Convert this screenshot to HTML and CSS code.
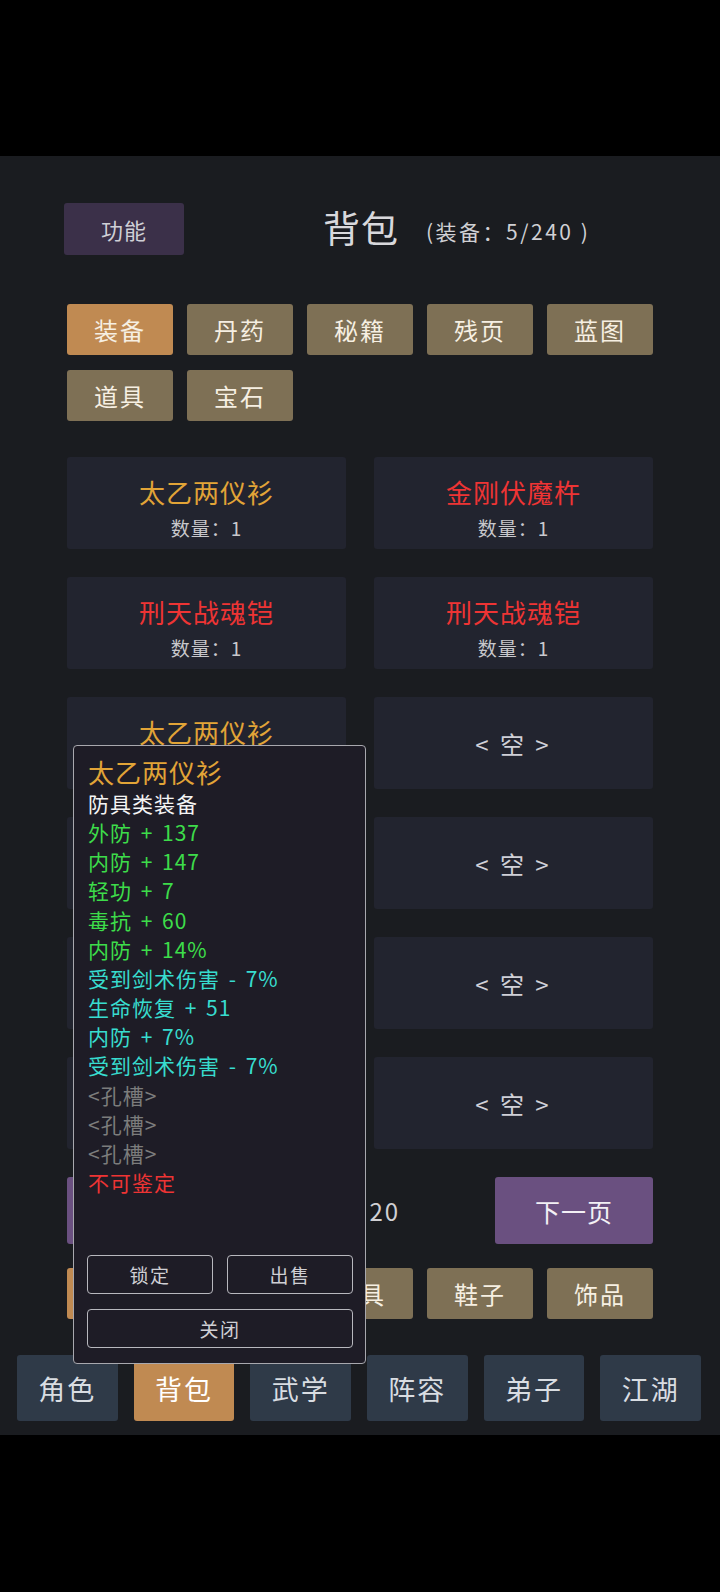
FILE: index.html
```html
<!DOCTYPE html>
<html lang="zh">
<head>
  <meta charset="UTF-8">
  <meta name="viewport" content="width=device-width, initial-scale=1.0">
  <title>背包</title>
  <link rel="stylesheet" href="styles.css">
</head>
<body>
  <div class="app">
    <div class="header">
      <button class="func-btn">功能</button>
      <div class="title">背包<span class="sub">(装备：5/240 )</span></div>
    </div>

    <div class="tabs">
      <button class="tab active">装备</button>
      <button class="tab">丹药</button>
      <button class="tab">秘籍</button>
      <button class="tab">残页</button>
      <button class="tab">蓝图</button>
      <button class="tab">道具</button>
      <button class="tab">宝石</button>
    </div>

    <div class="grid">
      <div class="card"><div class="name gold">太乙两仪衫</div><div class="count">数量：1</div></div>
      <div class="card"><div class="name red">金刚伏魔杵</div><div class="count">数量：1</div></div>
      <div class="card"><div class="name red">刑天战魂铠</div><div class="count">数量：1</div></div>
      <div class="card"><div class="name red">刑天战魂铠</div><div class="count">数量：1</div></div>
      <div class="card"><div class="name gold">太乙两仪衫</div><div class="count">数量：1</div></div>
      <div class="card empty">&lt; 空 &gt;</div>
      <div class="card empty">&lt; 空 &gt;</div>
      <div class="card empty">&lt; 空 &gt;</div>
      <div class="card empty">&lt; 空 &gt;</div>
      <div class="card empty">&lt; 空 &gt;</div>
      <div class="card empty">&lt; 空 &gt;</div>
      <div class="card empty">&lt; 空 &gt;</div>
    </div>

    <div class="pager">
      <button class="page-btn">上一页</button>
      <div class="page-num">1 / 20</div>
      <button class="page-btn">下一页</button>
    </div>

    <div class="filters">
      <button class="tab active">全部</button>
      <button class="tab">武器</button>
      <button class="tab">防具</button>
      <button class="tab">鞋子</button>
      <button class="tab">饰品</button>
    </div>

    <div class="nav">
      <button class="nav-btn">角色</button>
      <button class="nav-btn active">背包</button>
      <button class="nav-btn">武学</button>
      <button class="nav-btn">阵容</button>
      <button class="nav-btn">弟子</button>
      <button class="nav-btn">江湖</button>
    </div>

    <!-- item detail tooltip -->
    <div class="popup">
      <div class="pop-title">太乙两仪衫</div>
      <div class="line white">防具类装备</div>
      <div class="line green">外防 + 137</div>
      <div class="line green">内防 + 147</div>
      <div class="line green">轻功 + 7</div>
      <div class="line green">毒抗 + 60</div>
      <div class="line green">内防 + 14%</div>
      <div class="line cyan">受到剑术伤害 - 7%</div>
      <div class="line cyan">生命恢复 + 51</div>
      <div class="line cyan">内防 + 7%</div>
      <div class="line cyan">受到剑术伤害 - 7%</div>
      <div class="line gray">&lt;孔槽&gt;</div>
      <div class="line gray">&lt;孔槽&gt;</div>
      <div class="line gray">&lt;孔槽&gt;</div>
      <div class="line red">不可鉴定</div>
      <div class="pop-actions">
        <button class="pop-btn">锁定</button>
        <button class="pop-btn">出售</button>
        <button class="pop-btn wide">关闭</button>
      </div>
    </div>
  </div>
</body>
</html>
```

FILE: styles.css
```css
body {
  margin: 0;
  background: #000;
  font-family: "Noto Sans CJK SC", "Noto Sans", sans-serif;
  width: 720px;
  height: 1592px;
}

button {
  font-family: inherit;
  border: none;
  cursor: pointer;
  padding: 0;
}

.app {
  position: relative;
  margin-top: 156px;
  height: 1279px;
  box-sizing: border-box;
  padding: 47px 67px 0 67px;
  background: #1a1c20;
}

.header {
  display: flex;
  align-items: center;
  height: 52px;
}

.func-btn {
  width: 120px;
  height: 52px;
  margin-left: -3px;
  background: #3b3049;
  color: #cfcfd6;
  font-size: 22px;
  letter-spacing: 1px;
  border-radius: 3px;
}

.title {
  margin-left: 139px;
  color: #d8d8dc;
  font-size: 37px;
  letter-spacing: 1px;
  line-height: 52px;
  white-space: nowrap;
}

.sub {
  font-size: 21px;
  letter-spacing: 2.5px;
  color: #d0d0d4;
  margin-left: 27px;
  vertical-align: 3px;
}

.tabs,
.filters {
  display: grid;
  grid-template-columns: repeat(5, 1fr);
  gap: 15px 14px;
}

.tabs {
  margin-top: 49px;
}

.tab {
  height: 51px;
  background: #7e7055;
  color: #f6efe2;
  font-size: 24px;
  letter-spacing: 2px;
  border-radius: 3px;
}

.tab.active {
  background: #c08a52;
}

.grid {
  display: grid;
  grid-template-columns: 1fr 1fr;
  grid-auto-rows: 92px;
  gap: 28px;
  margin-top: 36px;
}

.card {
  background: #22242f;
  border-radius: 3px;
  box-sizing: border-box;
  padding-top: 18px;
  text-align: center;
}

.card .name {
  font-size: 26px;
  letter-spacing: 1px;
  line-height: 34px;
}

.card .count {
  font-size: 19px;
  letter-spacing: 1px;
  color: #c8c8cc;
  line-height: 38px;
}

.card.empty {
  padding-top: 0;
  display: flex;
  align-items: center;
  justify-content: center;
  color: #d0d0d8;
  font-size: 24px;
  letter-spacing: 3px;
}

.gold { color: #e2a437; }
.red { color: #ee3434; }
.white { color: #f4f4f4; }
.green { color: #3ddc4a; }
.cyan { color: #38dccf; }
.gray { color: #7c7c7c; }

.pager {
  display: flex;
  align-items: center;
  justify-content: space-between;
  margin-top: 28px;
  height: 67px;
}

.page-btn {
  width: 158px;
  height: 67px;
  background: #6a5080;
  color: #f3f0f5;
  font-size: 25px;
  letter-spacing: 1px;
  border-radius: 3px;
}

.page-num {
  color: #d0d0d4;
  font-size: 24px;
  letter-spacing: 2px;
  padding-left: 8px;
}

.filters {
  margin-top: 24px;
}

.nav {
  display: grid;
  grid-template-columns: repeat(6, 1fr);
  gap: 16px;
  margin: 36px -48px 0 -50px;
}

.nav-btn {
  height: 66px;
  background: #2f3a48;
  color: #d9dde2;
  font-size: 27px;
  letter-spacing: 2px;
  border-radius: 3px;
}

.nav-btn.active {
  background: #c08a52;
  color: #fff;
}

.popup {
  position: absolute;
  left: 73px;
  top: 589px;
  width: 293px;
  height: 619px;
  box-sizing: border-box;
  padding: 9px 12px 15px 14px;
  background: #1e1c26;
  border: 1px solid #a8a8ae;
  border-radius: 4px;
  display: flex;
  flex-direction: column;
}

.pop-title {
  color: #e2a437;
  font-size: 26px;
  letter-spacing: 1px;
  line-height: 34px;
}

.line {
  font-size: 21px;
  letter-spacing: 1px;
  word-spacing: 3px;
  line-height: 29.15px;
  white-space: nowrap;
}

.pop-actions {
  margin-top: auto;
  margin-left: -1px;
  display: grid;
  grid-template-columns: 1fr 1fr;
  gap: 15px 14px;
}

.pop-btn {
  height: 39px;
  background: transparent;
  border: 1px solid #b8b8be;
  border-radius: 4px;
  color: #cfcfd4;
  font-size: 19px;
  letter-spacing: 1.5px;
}

.pop-btn.wide {
  grid-column: span 2;
}
```
